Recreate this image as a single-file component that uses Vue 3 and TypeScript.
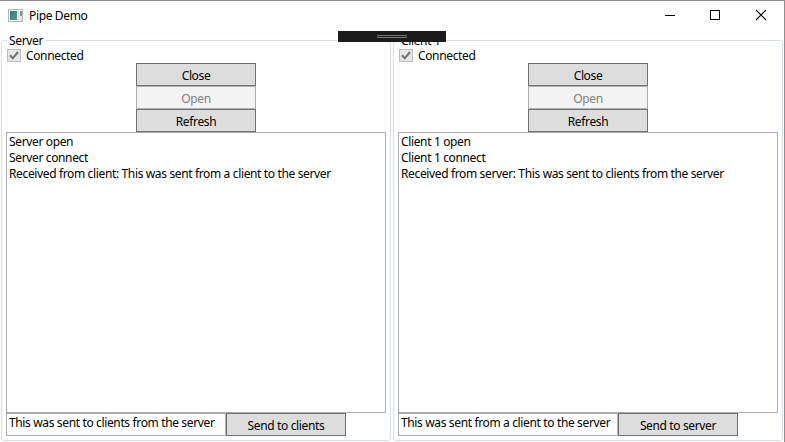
<script setup lang="ts">
import { ref } from 'vue'

interface Pipe {
  name: string
  connected: boolean
  log: string[]
  message: string
  send: string
}

const pipes = ref<Pipe[]>([
  {
    name: 'Server',
    connected: true,
    log: ['Server open', 'Server connect', 'Received from client: This was sent from a client to the server'],
    message: 'This was sent to clients from the server',
    send: 'Send to clients',
  },
  {
    name: 'Client 1',
    connected: true,
    log: ['Client 1 open', 'Client 1 connect', 'Received from server: This was sent to clients from the server'],
    message: 'This was sent from a client to the server',
    send: 'Send to server',
  },
])
</script>

<template>
  <div class="window">
    <header class="titlebar">
      <svg class="app-icon" width="16" height="14" viewBox="0 0 16 14" shape-rendering="crispEdges">
        <defs>
          <linearGradient id="pane" x1="0" y1="0" x2="1" y2="1">
            <stop offset="0" stop-color="#3b7192" />
            <stop offset="1" stop-color="#48a374" />
          </linearGradient>
        </defs>
        <rect x="0.5" y="0.5" width="14" height="12" fill="#f3f5f6" stroke="#b4b7ba" />
        <rect x="2" y="2" width="7" height="9" fill="url(#pane)" />
        <rect x="10" y="2" width="1" height="9" fill="#d4dadd" />
        <rect x="12" y="2" width="2" height="5" fill="#6ba296" />
        <rect x="12" y="7" width="2" height="4" fill="#dce1e4" />
      </svg>
      <span class="title">Pipe Demo</span>
      <nav class="controls">
        <svg width="46" height="30" viewBox="0 0 46 30"><path d="M18 14.5h10" stroke="#000" /></svg>
        <svg width="46" height="30" viewBox="0 0 46 30"><rect x="17.5" y="9.5" width="9" height="9" fill="none" stroke="#000" /></svg>
        <svg width="46" height="30" viewBox="0 0 46 30"><path d="M17 9l10 10M27 9L17 19" stroke="#000" stroke-width="1.1" /></svg>
      </nav>
    </header>
    <div class="debug-bar"><i></i><i></i></div>
    <main class="panes">
      <section v-for="pipe in pipes" :key="pipe.name" class="group">
        <h2 class="legend"><span>{{ pipe.name }}</span></h2>
        <div class="status">
          <svg width="14" height="13" viewBox="0 0 14 13">
            <rect x="0.5" y="0.5" width="13" height="12" fill="#e6e6e6" stroke="#bcbcbc" />
            <path v-if="pipe.connected" d="M3 6.3l2.8 3L11 3" fill="none" stroke="#707070" stroke-width="2" />
          </svg>
          <span>Connected</span>
        </div>
        <div class="actions">
          <button class="btn">Close</button>
          <button class="btn" disabled>Open</button>
          <button class="btn">Refresh</button>
        </div>
        <ul class="log">
          <li v-for="line in pipe.log" :key="line">{{ line }}</li>
        </ul>
        <div class="composer">
          <div class="field">{{ pipe.message }}</div>
          <button class="btn">{{ pipe.send }}</button>
        </div>
      </section>
    </main>
  </div>
</template>

<style scoped>
.window {
  box-sizing: border-box;
  position: relative;
  display: flex;
  flex-direction: column;
  width: 785px;
  height: 442px;
  overflow: hidden;
  border-top: 1px solid #8f8f8f;
  border-right: 1px solid #8f8f8f;
  background: #fff;
  color: #000;
  font: 12px/16px "Noto Sans", sans-serif;
  letter-spacing: -0.36px;
  white-space: nowrap;
}
.titlebar {
  display: flex;
  align-items: center;
  height: 30px;
  flex: none;
  padding-left: 8px;
}
.app-icon {
  margin-right: 5px;
}
.controls {
  display: flex;
  margin-left: auto;
  margin-right: -1px;
}
.controls svg {
  display: block;
}
.debug-bar {
  position: absolute;
  z-index: 2;
  top: 30px;
  left: 338px;
  display: flex;
  flex-direction: column;
  align-items: center;
  justify-content: center;
  gap: 1px;
  width: 108px;
  height: 11px;
  background: #1b1b1b;
}
.debug-bar i {
  width: 30px;
  height: 1px;
  background: #777;
}
.panes {
  display: flex;
  gap: 2px;
  padding: 9px 0 0 1px;
}
.group {
  box-sizing: border-box;
  display: flex;
  flex-direction: column;
  width: 390px;
  height: 401px;
  padding: 0 4px;
  border: 1px solid #d5dfe5;
  border-radius: 3px;
}
.legend {
  display: flex;
  align-items: flex-end;
  height: 8px;
  margin: 0;
  font: inherit;
}
.legend span {
  padding: 0 3px 0 2px;
  margin-left: 1px;
  background: #fff;
}
.status {
  display: flex;
  align-items: center;
  gap: 5px;
  height: 13px;
  margin: 0 0 1px 1px;
}
.status svg {
  flex: none;
}
.actions {
  display: flex;
  flex-direction: column;
  align-items: center;
}
.btn {
  box-sizing: border-box;
  flex: none;
  width: 120px;
  height: 23px;
  padding: 3px 0 0;
  border: 1px solid #707070;
  border-radius: 0;
  background: #ddd;
  color: #000;
  font: inherit;
  letter-spacing: inherit;
}
.btn:disabled {
  border-color: #adb2b5;
  background: #f4f4f4;
  color: #838383;
}
.log {
  box-sizing: border-box;
  height: 281px;
  margin: 0;
  padding: 1px 2px;
  border: 1px solid #abadb3;
  list-style: none;
}
.composer {
  display: flex;
}
.field {
  box-sizing: border-box;
  width: 220px;
  height: 23px;
  padding: 1px 2px;
  border: 1px solid #abadb3;
}
</style>
